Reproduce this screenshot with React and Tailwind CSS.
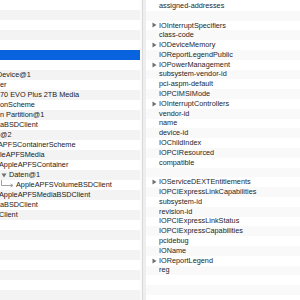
import React from "react";

const leftRows = [
  { t: "" }, { t: "" }, { t: "" }, { t: "" }, { t: "" },
  { t: "", sel: true },
  { t: "" },
  { t: "Device@1", ml: "-ml-[3px]" },
  { t: "er", ml: "ml-0" },
  { t: "70 EVO Plus 2TB Media", ml: "ml-0" },
  { t: "onScheme", ml: "ml-0" },
  { t: "n Partition@1", ml: "ml-0" },
  { t: "aBSDClient", ml: "ml-0" },
  { t: "@2", ml: "ml-0" },
  { t: "APFSContainerScheme", ml: "-ml-[2px]" },
  { t: "leAPFSMedia", ml: "ml-0" },
  { t: "AppleAPFSContainer", ml: "-ml-[1px]" },
  { t: "Daten@1", tri: true },
  { t: "AppleAPFSVolumeBSDClient", conn: true },
  { t: "AppleAPFSMediaBSDClient", ml: "-ml-[1px]" },
  { t: "aBSDClient", ml: "ml-0" },
  { t: "Client", ml: "-ml-[1px]" },
  { t: "" }, { t: "" }, { t: "" }, { t: "" }, { t: "" }, { t: "" }, { t: "" }, { t: "" },
];

const rightRows = [
  ["assigned-addresses", false],
  ["", false],
  ["IOInterruptSpecifiers", true],
  ["class-code", false],
  ["IODeviceMemory", true],
  ["IOReportLegendPublic", false],
  ["IOPowerManagement", true],
  ["subsystem-vendor-id", false],
  ["pci-aspm-default", false],
  ["IOPCIMSIMode", false],
  ["IOInterruptControllers", true],
  ["vendor-id", false],
  ["name", false],
  ["device-id", false],
  ["IOChildIndex", false],
  ["IOPCIResourced", false],
  ["compatible", false],
  ["", false],
  ["IOServiceDEXTEntitlements", true],
  ["IOPCIExpressLinkCapabilities", false],
  ["subsystem-id", false],
  ["revision-id", false],
  ["IOPCIExpressLinkStatus", false],
  ["IOPCIExpressCapabilities", false],
  ["pcidebug", false],
  ["IOName", false],
  ["IOReportLegend", true],
  ["reg", false],
  ["", false],
  ["", false],
  ["", false],
];

function RightTri() {
  return (
    <svg width="5" height="6" viewBox="0 0 5 6" className="shrink-0">
      <path d="M0.5 0.5 L4.5 3 L0.5 5.5 Z" fill="#707070" />
    </svg>
  );
}

function DownTri() {
  return (
    <svg width="6" height="5" viewBox="0 0 6 5" className="shrink-0">
      <path d="M0.5 0.5 L5.5 0.5 L3 4.5 Z" fill="#707070" />
    </svg>
  );
}

function Connector() {
  return (
    <svg width="15" height="10" viewBox="0 0 15 10" className="shrink-0">
      <path d="M1.5 0 L1.5 5.5 L12 5.5" stroke="#8a8a8a" strokeWidth="0.8" fill="none" />
      <path d="M10.5 4 L13 5.5 L10.5 7" stroke="#8a8a8a" strokeWidth="0.8" fill="none" />
    </svg>
  );
}

export default function App() {
  return (
    <div
      className="w-[300px] h-[300px] flex overflow-hidden bg-white text-[7.3px] text-[#1a1a1a]"
      style={{ fontFamily: '"Liberation Sans", Arial, sans-serif' }}
    >
      <div className="w-[140px] shrink-0 flex flex-col overflow-hidden">
        {leftRows.map((r, i) => {
          const bg = r.sel ? "bg-[#0a63de]" : i % 2 === 1 ? "bg-[#f3f3f3]" : "bg-white";
          return (
            <div key={i} className={`h-[10px] shrink-0 flex items-center whitespace-nowrap overflow-hidden leading-[10px] ${bg}`}>
              {r.tri ? (
                <div className="flex items-center pl-[1px] gap-[2px]">
                  <DownTri />
                  <span>{r.t}</span>
                </div>
              ) : r.conn ? (
                <div className="flex items-center">
                  <Connector />
                  <span className="ml-[1px]">{r.t}</span>
                </div>
              ) : (
                <span className={r.ml || ""}>{r.t}</span>
              )}
            </div>
          );
        })}
      </div>
      <div className="w-[2px] shrink-0 bg-[#fafafa]" />
      <div className="w-[1px] shrink-0 bg-[#d8d8d8]" />
      <div className="w-[3px] shrink-0 bg-[#eeeeee]" />
      <div className="flex-1 flex flex-col pt-[1px] overflow-hidden">
        {rightRows.map(([t, tri], i) => (
          <div
            key={i}
            className={`h-[9.8px] shrink-0 flex items-center whitespace-nowrap pl-[6px] leading-[10px] text-[#262626] ${i % 2 === 1 ? "bg-[#f9f9f9]" : "bg-white"}`}
          >
            <div className="w-[7px] shrink-0 flex items-center">{tri ? <RightTri /> : null}</div>
            <span>{t}</span>
          </div>
        ))}
      </div>
    </div>
  );
}
